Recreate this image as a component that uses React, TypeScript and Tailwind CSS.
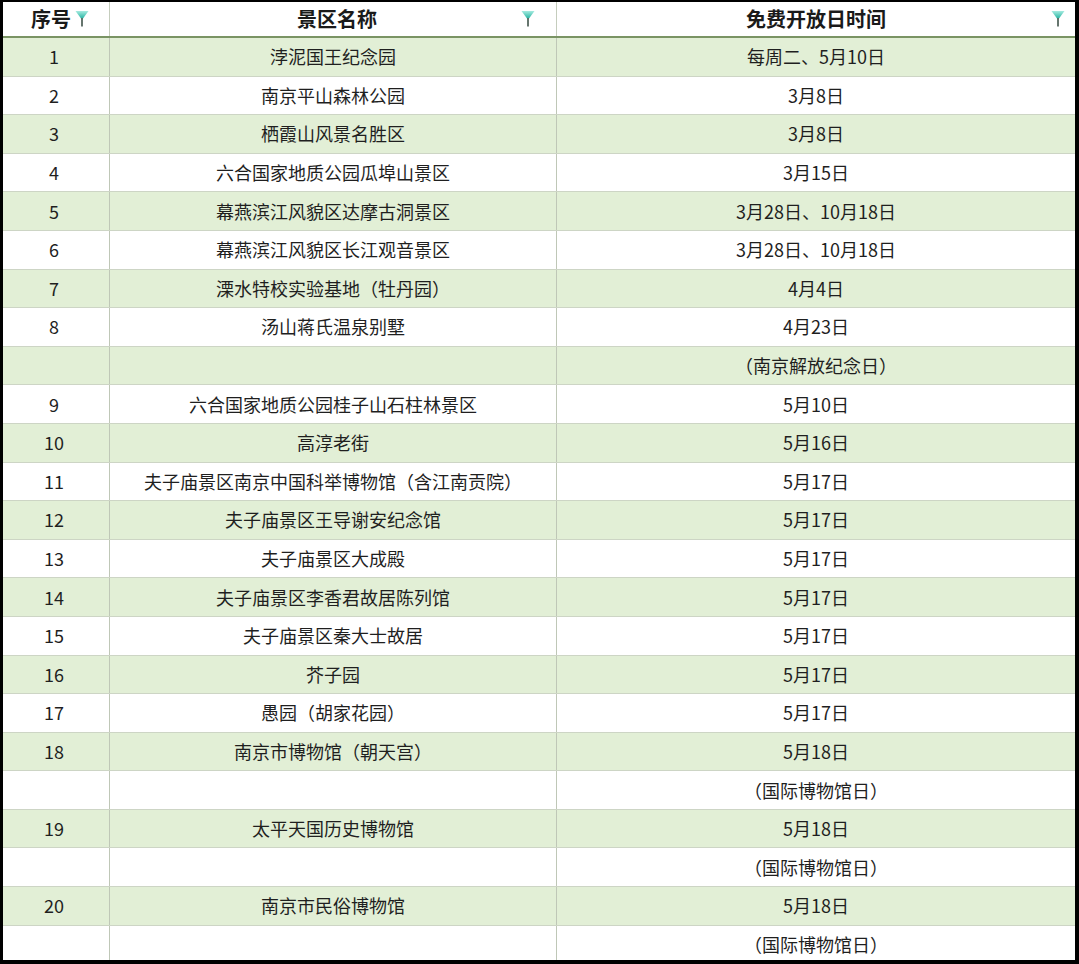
import React from 'react'

const rows: [string, string, string][] = [
  ['1', '浡泥国王纪念园', '每周二、5月10日'],
  ['2', '南京平山森林公园', '3月8日'],
  ['3', '栖霞山风景名胜区', '3月8日'],
  ['4', '六合国家地质公园瓜埠山景区', '3月15日'],
  ['5', '幕燕滨江风貌区达摩古洞景区', '3月28日、10月18日'],
  ['6', '幕燕滨江风貌区长江观音景区', '3月28日、10月18日'],
  ['7', '溧水特校实验基地（牡丹园）', '4月4日'],
  ['8', '汤山蒋氏温泉别墅', '4月23日'],
  ['', '', '（南京解放纪念日）'],
  ['9', '六合国家地质公园桂子山石柱林景区', '5月10日'],
  ['10', '高淳老街', '5月16日'],
  ['11', '夫子庙景区南京中国科举博物馆（含江南贡院）', '5月17日'],
  ['12', '夫子庙景区王导谢安纪念馆', '5月17日'],
  ['13', '夫子庙景区大成殿', '5月17日'],
  ['14', '夫子庙景区李香君故居陈列馆', '5月17日'],
  ['15', '夫子庙景区秦大士故居', '5月17日'],
  ['16', '芥子园', '5月17日'],
  ['17', '愚园（胡家花园）', '5月17日'],
  ['18', '南京市博物馆（朝天宫）', '5月18日'],
  ['', '', '（国际博物馆日）'],
  ['19', '太平天国历史博物馆', '5月18日'],
  ['', '', '（国际博物馆日）'],
  ['20', '南京市民俗博物馆', '5月18日'],
  ['', '', '（国际博物馆日）'],
]

const Funnel = () => (
  <svg width="14" height="18" viewBox="0 0 14 18">
    <defs>
      <linearGradient id="fg" x1="0" y1="0" x2="0" y2="1">
        <stop offset="0%" stopColor="#a6ebe0" />
        <stop offset="100%" stopColor="#27b4a2" />
      </linearGradient>
    </defs>
    <path d="M0.5 1 H13.5 L8 8.5 H6 Z" fill="url(#fg)" />
    <rect x="6.1" y="8" width="1.8" height="8.5" fill="#56665f" />
  </svg>
)

const font = { fontFamily: '"Noto Sans CJK SC", "Noto Sans", sans-serif' }

export default function App() {
  return (
    <div className="w-[1079px] h-[964px] bg-black pt-[2px] pl-[3px] pr-[4px] pb-[4px] overflow-hidden" style={font}>
      <div className="w-full h-full bg-white overflow-hidden">
        <div className="grid grid-cols-[107px_447px_1fr] h-[36px] border-b-[2px] border-[#7a9464] bg-white text-[20px] font-bold text-[#1a1a1a]">
          <div className="flex items-center justify-center gap-1 border-r border-[#c5cdbd] pl-2">
            <span>序号</span>
            <Funnel />
          </div>
          <div className="relative flex items-center justify-center border-r border-[#c5cdbd] pl-2">
            <span>景区名称</span>
            <div className="absolute right-[21px] top-[8px]"><Funnel /></div>
          </div>
          <div className="relative flex items-center justify-center">
            <span>免费开放日时间</span>
            <div className="absolute right-[10px] top-[8px]"><Funnel /></div>
          </div>
        </div>
        {rows.map(([n, name, date], i) => (
          <div
            key={i}
            className={`grid grid-cols-[107px_447px_1fr] h-[38.6px] border-b border-[#cdd5c5] text-[18px] text-[#1f1f1f] ${i % 2 === 0 ? 'bg-[#e2efd6]' : 'bg-white'}`}
          >
            <div className="flex items-center justify-center border-r border-[#bfc7b7] pr-1">{n}</div>
            <div className="flex items-center justify-center border-r border-[#bfc7b7]">{name}</div>
            <div className="flex items-center justify-center">{date}</div>
          </div>
        ))}
      </div>
    </div>
  )
}
